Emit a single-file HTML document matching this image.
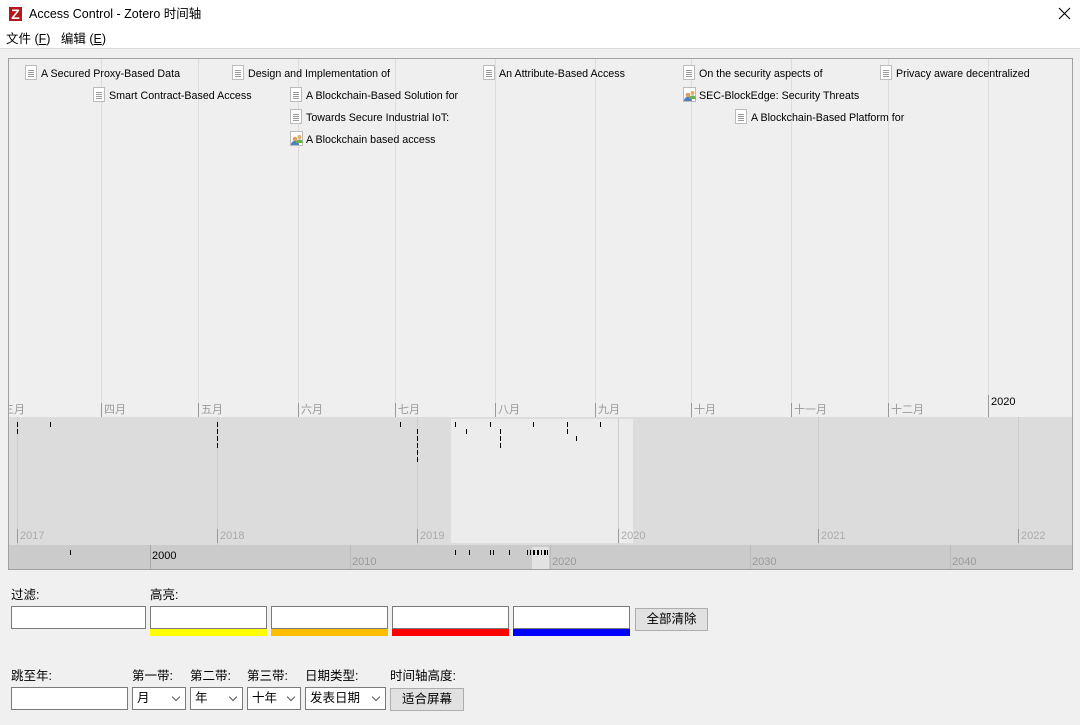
<!DOCTYPE html>
<html><head><meta charset="utf-8"><style>
*{margin:0;padding:0;box-sizing:border-box}
body{width:1080px;height:725px;background:#f0f0f0;font-family:"Liberation Sans","Noto Sans CJK SC",sans-serif;font-size:12px;color:#000;position:relative;overflow:hidden}
.a{position:absolute}
.title{left:0;top:0;width:1080px;height:49px;background:#fff;border-bottom:1px solid #dadada}
.it{position:absolute;height:14px;line-height:14px;white-space:nowrap;font-size:10.7px}
.ic{position:absolute;left:-16px;top:-2px;width:12px;height:15px;background:#fff;border:1px solid #bbb}
.ic:after{content:"";position:absolute;left:2px;top:4px;width:6px;height:7px;background:repeating-linear-gradient(#999 0 1px,transparent 1px 2px)}
.ic2{position:absolute;left:-16px;top:-2px;width:14px;height:15px}
.vl{position:absolute;width:1px}
.ml{position:absolute;top:344px;color:#999;font-size:11px;padding-left:2px;border-left:1px solid #999;height:14px;line-height:14px}
.t{position:absolute;width:1px;height:5px;background:#000}
.lab{position:absolute;font-size:12.5px}
.in{position:absolute;background:#fff;border:1px solid #7a7a7a;height:23px}
.btn{position:absolute;background:#e1e1e1;border:1px solid #adadad;text-align:center;font-size:12.5px;line-height:20px}
.sel{position:absolute;background:#fff;border:1px solid #7a7a7a;height:23px;font-size:12.5px;line-height:21px;padding-left:4px}
.sel:after{content:"";position:absolute;right:6px;top:6px;width:5px;height:5px;border-right:1px solid #555;border-bottom:1px solid #555;transform:rotate(45deg)}
</style></head><body>
<div class="a title"></div>
<div class="a" style="left:9px;top:7px;width:13px;height:14px;background:#b3161b;color:#fff;font-weight:bold;font-size:14px;line-height:14px;text-align:center">Z</div>
<div class="a" style="left:29px;top:6px;font-size:12.5px;line-height:17px">Access Control - Zotero 时间轴</div>
<svg class="a" style="left:1058px;top:7px" width="13" height="13" viewBox="0 0 13 13"><path d="M1 1L12 12M12 1L1 12" stroke="#000" stroke-width="1.1"/></svg>
<div class="a" style="left:6px;top:31px;font-size:12.5px;line-height:17px">文件 (<u>F</u>)&nbsp;&nbsp;&nbsp;编辑 (<u>E</u>)</div>

<div class="a" style="left:8px;top:58px;width:1065px;height:512px;border:1px solid #a0a0a0;background:#efefef;overflow:hidden">
 <div class="vl" style="left:92px;top:0;height:358px;background:#ddd"></div>
 <div class="vl" style="left:189px;top:0;height:358px;background:#ddd"></div>
 <div class="vl" style="left:289px;top:0;height:358px;background:#ddd"></div>
 <div class="vl" style="left:386px;top:0;height:358px;background:#ddd"></div>
 <div class="vl" style="left:486px;top:0;height:358px;background:#ddd"></div>
 <div class="vl" style="left:586px;top:0;height:358px;background:#ddd"></div>
 <div class="vl" style="left:682px;top:0;height:358px;background:#ddd"></div>
 <div class="vl" style="left:782px;top:0;height:358px;background:#ddd"></div>
 <div class="vl" style="left:879px;top:0;height:358px;background:#ddd"></div>
 <div class="vl" style="left:979px;top:0;height:358px;background:#ddd"></div>
 <div class="ml" style="left:-8px;border:none">三月</div>
 <div class="ml" style="left:92px">四月</div>
 <div class="ml" style="left:189px">五月</div>
 <div class="ml" style="left:289px">六月</div>
 <div class="ml" style="left:386px">七月</div>
 <div class="ml" style="left:486px">八月</div>
 <div class="ml" style="left:586px">九月</div>
 <div class="ml" style="left:682px">十月</div>
 <div class="ml" style="left:782px">十一月</div>
 <div class="ml" style="left:879px">十二月</div>
 <div class="ml" style="left:979px;top:336px;height:22px;color:#000;line-height:14px">2020</div>

 <div class="it" style="left:32px;top:8px"><span class="ic"></span>A Secured Proxy-Based Data</div>
 <div class="it" style="left:100px;top:30px"><span class="ic"></span>Smart Contract-Based Access</div>
 <div class="it" style="left:239px;top:8px"><span class="ic"></span>Design and Implementation of</div>
 <div class="it" style="left:297px;top:30px"><span class="ic"></span>A Blockchain-Based Solution for</div>
 <div class="it" style="left:297px;top:52px"><span class="ic"></span>Towards Secure Industrial IoT:</div>
 <div class="it" style="left:297px;top:74px"><svg class="ic2" viewBox="0 0 14 15"><rect x="0.5" y="0.5" width="12" height="14" fill="#fff" stroke="#bbb"/><circle cx="5" cy="8" r="2.3" fill="#d9a060"/><path d="M1 14c0-3 2-4 4-4s4 1 4 4z" fill="#4a7fc0"/><circle cx="9.5" cy="6" r="2" fill="#e0b070"/><path d="M6 12c0-3 2-3.5 3.5-3.5S13 9 13 12z" fill="#6ab04c"/></svg>A Blockchain based access</div>
 <div class="it" style="left:490px;top:8px"><span class="ic"></span>An Attribute-Based Access</div>
 <div class="it" style="left:690px;top:8px"><span class="ic"></span>On the security aspects of</div>
 <div class="it" style="left:690px;top:30px"><svg class="ic2" viewBox="0 0 14 15"><rect x="0.5" y="0.5" width="12" height="14" fill="#fff" stroke="#bbb"/><circle cx="5" cy="8" r="2.3" fill="#d9a060"/><path d="M1 14c0-3 2-4 4-4s4 1 4 4z" fill="#4a7fc0"/><circle cx="9.5" cy="6" r="2" fill="#e0b070"/><path d="M6 12c0-3 2-3.5 3.5-3.5S13 9 13 12z" fill="#6ab04c"/></svg>SEC-BlockEdge: Security Threats</div>
 <div class="it" style="left:742px;top:52px"><span class="ic"></span>A Blockchain-Based Platform for</div>
 <div class="it" style="left:887px;top:8px"><span class="ic"></span>Privacy aware decentralized</div>

 <div class="a" style="left:0;top:358px;width:1065px;height:128px;background:#dcdcdc">
  <div class="a" style="left:442px;top:2px;width:182px;height:124px;background:#ececec"></div>
  <div class="vl" style="left:8px;top:0;height:128px;background:#ccc"></div>
  <div class="vl" style="left:208px;top:0;height:128px;background:#ccc"></div>
  <div class="vl" style="left:408px;top:0;height:128px;background:#ccc"></div>
  <div class="vl" style="left:609px;top:0;height:128px;background:#ccc"></div>
  <div class="vl" style="left:809px;top:0;height:128px;background:#ccc"></div>
  <div class="vl" style="left:1009px;top:0;height:128px;background:#ccc"></div>
  <div class="ml" style="left:8px;top:112px;color:#aaa">2017</div>
  <div class="ml" style="left:208px;top:112px;color:#aaa">2018</div>
  <div class="ml" style="left:408px;top:112px;color:#aaa">2019</div>
  <div class="ml" style="left:609px;top:112px;color:#aaa">2020</div>
  <div class="ml" style="left:809px;top:112px;color:#aaa">2021</div>
  <div class="ml" style="left:1009px;top:112px;color:#aaa">2022</div>
  <div class="t" style="left:8px;top:5px"></div><div class="t" style="left:41px;top:5px"></div><div class="t" style="left:208px;top:5px"></div><div class="t" style="left:391px;top:5px"></div><div class="t" style="left:446px;top:5px"></div><div class="t" style="left:481px;top:5px"></div><div class="t" style="left:524px;top:5px"></div><div class="t" style="left:558px;top:5px"></div><div class="t" style="left:591px;top:5px"></div>
  <div class="t" style="left:8px;top:12px"></div><div class="t" style="left:208px;top:12px"></div><div class="t" style="left:408px;top:12px"></div><div class="t" style="left:457px;top:12px"></div><div class="t" style="left:491px;top:12px"></div><div class="t" style="left:558px;top:12px"></div>
  <div class="t" style="left:208px;top:19px"></div><div class="t" style="left:408px;top:19px"></div><div class="t" style="left:491px;top:19px"></div><div class="t" style="left:567px;top:19px"></div>
  <div class="t" style="left:208px;top:26px"></div><div class="t" style="left:408px;top:26px"></div><div class="t" style="left:491px;top:26px"></div>
  <div class="t" style="left:408px;top:33px"></div><div class="t" style="left:408px;top:40px"></div>
 </div>
 <div class="a" style="left:0;top:486px;width:1065px;height:26px;background:#cbcbcb">
  <div class="a" style="left:523px;top:2px;width:17px;height:24px;background:#e2e2e2"></div>
  <div class="vl" style="left:141px;top:0;height:26px;background:#aaa"></div>
  <div class="vl" style="left:341px;top:0;height:26px;background:#bbb"></div>
  <div class="vl" style="left:541px;top:0;height:26px;background:#bbb"></div>
  <div class="vl" style="left:741px;top:0;height:26px;background:#bbb"></div>
  <div class="vl" style="left:941px;top:0;height:26px;background:#bbb"></div>
  <div class="a" style="left:143px;top:5px;font-size:11px">2000</div>
  <div class="a" style="left:343px;top:11px;font-size:11px;color:#999">2010</div>
  <div class="a" style="left:543px;top:11px;font-size:11px;color:#999">2020</div>
  <div class="a" style="left:743px;top:11px;font-size:11px;color:#999">2030</div>
  <div class="a" style="left:943px;top:11px;font-size:11px;color:#999">2040</div>
  <div class="t" style="left:61px;top:5px"></div><div class="t" style="left:446px;top:5px"></div><div class="t" style="left:460px;top:5px"></div><div class="t" style="left:481px;top:5px"></div><div class="t" style="left:484px;top:5px"></div><div class="t" style="left:500px;top:5px"></div>
  <div class="t" style="left:518px;top:5px"></div><div class="t" style="left:521px;top:5px"></div><div class="t" style="left:524px;top:5px;width:2px"></div><div class="t" style="left:528px;top:5px;width:2px"></div><div class="t" style="left:532px;top:5px"></div><div class="t" style="left:535px;top:5px;width:2px"></div><div class="t" style="left:538px;top:5px"></div>
 </div>
</div>

<div class="lab" style="left:11px;top:584px">过滤:</div>
<div class="lab" style="left:150px;top:584px">高亮:</div>
<div class="in" style="left:11px;top:606px;width:135px"></div>
<div class="in" style="left:150px;top:606px;width:117px"></div>
<div class="in" style="left:271px;top:606px;width:117px"></div>
<div class="in" style="left:392px;top:606px;width:117px"></div>
<div class="in" style="left:513px;top:606px;width:117px"></div>
<div class="a" style="left:150px;top:629px;width:117px;height:7px;background:#ffff00"></div>
<div class="a" style="left:271px;top:629px;width:117px;height:7px;background:#ffbf00"></div>
<div class="a" style="left:392px;top:629px;width:117px;height:7px;background:#ff0000"></div>
<div class="a" style="left:513px;top:629px;width:117px;height:7px;background:#0000ff"></div>
<div class="btn" style="left:635px;top:608px;width:73px;height:23px">全部清除</div>

<div class="lab" style="left:11px;top:665px">跳至年:</div>
<div class="lab" style="left:132px;top:665px">第一带:</div>
<div class="lab" style="left:190px;top:665px">第二带:</div>
<div class="lab" style="left:247px;top:665px">第三带:</div>
<div class="lab" style="left:305px;top:665px">日期类型:</div>
<div class="lab" style="left:390px;top:665px">时间轴高度:</div>
<div class="in" style="left:11px;top:687px;width:117px"></div>
<div class="sel" style="left:132px;top:687px;width:54px">月</div>
<div class="sel" style="left:190px;top:687px;width:53px">年</div>
<div class="sel" style="left:247px;top:687px;width:54px">十年</div>
<div class="sel" style="left:305px;top:687px;width:81px">发表日期</div>
<div class="btn" style="left:390px;top:688px;width:74px;height:23px">适合屏幕</div>
</body></html>
